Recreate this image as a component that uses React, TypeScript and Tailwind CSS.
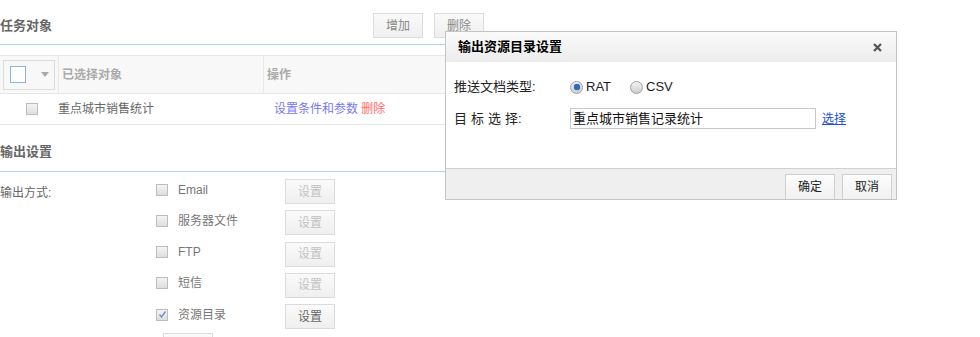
import React from 'react';

const outputs = [
  { label: 'Email', checked: false },
  { label: '服务器文件', checked: false },
  { label: 'FTP', checked: false },
  { label: '短信', checked: false },
  { label: '资源目录', checked: true },
];

const SmallCheck = ({ checked = false }: { checked?: boolean }) => (
  <span className="flex h-[12px] w-[12px] shrink-0 items-center justify-center border border-[#bdbdbd] bg-gradient-to-b from-[#f4f4f4] to-[#dedede]">
    {checked && (
      <svg width="9" height="9" viewBox="0 0 9 9">
        <path d="M1.5 4.5 L3.5 7 L7.5 1.5" fill="none" stroke="#7f93c9" strokeWidth="1.5" />
      </svg>
    )}
  </span>
);

const GreyButton = ({ children, disabled = false, className = '' }: { children?: React.ReactNode; disabled?: boolean; className?: string }) => (
  <div
    className={`flex h-[25px] w-[50px] shrink-0 items-center justify-center border border-[#dcdcdc] bg-gradient-to-b from-[#fafafa] to-[#efefef] text-[12px] ${
      disabled ? 'text-[#c2c2c2]' : 'text-[#666]'
    } ${className}`}
  >
    {children}
  </div>
);

const Radio = ({ checked }: { checked: boolean }) => (
  <span className="flex h-[13px] w-[13px] items-center justify-center rounded-full border border-[#a0a0a0] bg-gradient-to-b from-[#f2f2f2] to-[#cfcfcf]">
    {checked && <span className="h-[6px] w-[6px] rounded-full bg-[#2f6db5] shadow-[0_0_1px_#163d70]" />}
  </span>
);

export default function App() {
  return (
    <div className="relative h-[337px] w-[980px] overflow-hidden bg-white font-['Liberation_Sans','Noto_Sans_CJK_SC',sans-serif] text-[12px] text-[#666]">
      {/* page behind the dialog */}
      <div className="w-[880px]">
        <div className="flex items-center border-b border-[#acd3ee] pt-[13px] pb-[6px]">
          <div className="w-[373px] text-[13px] font-bold text-[#666]">任务对象</div>
          <GreyButton className="w-[49px] text-[#888]">增加</GreyButton>
          <GreyButton className="ml-[11px] w-[49px] text-[#888]">删除</GreyButton>
        </div>

        <div className="mt-[10px] border-y border-[#e6e6e6]">
          <div className="flex h-[38px] border-b border-[#e6e6e6] bg-[#f8f8f8]">
            <div className="flex w-[58px] items-center pl-[3px]">
              <div className="flex h-[30px] w-[52px] items-center border border-[#dcdcdc]">
                <span className="ml-[6px] h-[17px] w-[16px] border border-[#8eb3dd] bg-white" />
                <span className="ml-[15px] h-0 w-0 border-x-[4px] border-t-[5px] border-x-transparent border-t-[#aaa]" />
              </div>
            </div>
            <div className="flex w-[205px] items-center border-l border-[#e8e8e8] pl-[3px] font-bold text-[#aaa]">已选择对象</div>
            <div className="flex flex-1 items-center border-l border-[#e8e8e8] pl-[3px] font-bold text-[#aaa]">操作</div>
          </div>
          <div className="flex h-[30px] items-center">
            <div className="w-[58px] pl-[26px]">
              <SmallCheck />
            </div>
            <div className="w-[216px]">重点城市销售统计</div>
            <div className="text-[#7777f2]">
              设置条件和参数 <span className="text-[#ff6b6b]">删除</span>
            </div>
          </div>
        </div>

        <div className="flex h-[47px] items-end border-b border-[#b7cfe2] pb-[10px] text-[13px] font-bold text-[#666]">输出设置</div>

        <div className="flex pt-[7px]">
          <div className="flex h-[25px] w-[156px] items-center pt-[3px]">输出方式:</div>
          <div className="flex flex-col gap-[6.25px]">
            {outputs.map((o) => (
              <div key={o.label} className="flex h-[25px] items-center">
                <div className="flex w-[129px] items-center pb-[4px]">
                  <SmallCheck checked={o.checked} />
                  <span className="ml-[10px] text-[#777]">{o.label}</span>
                </div>
                <GreyButton disabled={!o.checked}>设置</GreyButton>
              </div>
            ))}
          </div>
        </div>
        <GreyButton className="ml-[163px] mt-[4px]" />
      </div>

      {/* dialog */}
      <div className="absolute left-[445px] top-[31px] flex h-[169px] w-[452px] flex-col border border-[#c4c4c4] bg-white">
        <div className="flex h-[30px] items-center justify-between bg-gradient-to-b from-[#fbfbfb] to-[#ececec] pl-[12px] pr-[14px]">
          <span className="text-[13px] font-bold text-black">输出资源目录设置</span>
          <svg width="9" height="9" viewBox="0 0 9 9">
            <path d="M1 1 L8 8 M8 1 L1 8" stroke="#555" strokeWidth="2.2" />
          </svg>
        </div>
        <div className="flex-1 pl-[8px] pt-[16px] text-[#222]">
          <div className="flex h-[18px] items-center">
            <span className="w-[116px] text-[13px]">推送文档类型:</span>
            <Radio checked />
            <span className="ml-[3px] w-[44px] text-[13px]">RAT</span>
            <Radio checked={false} />
            <span className="ml-[3px] text-[13px]">CSV</span>
          </div>
          <div className="mt-[12px] flex items-center">
            <span className="w-[116px] text-[13px]">
              <span className="tracking-[4px]">目标选</span>择:
            </span>
            <div className="flex h-[21px] w-[246px] items-center border border-[#c9c9c9] pl-[2px] text-[13px] text-[#111]">重点城市销售记录统计</div>
            <span className="ml-[6px] text-[12px] text-[#1a4fd6] underline">选择</span>
          </div>
        </div>
        <div className="flex h-[31px] items-end justify-end gap-[7px] border-t border-[#d0d0d0] bg-[#efefef] pr-[4px]">
          <div className="flex h-[25px] w-[50px] items-center justify-center border border-b-0 border-[#cfcfcf] bg-gradient-to-b from-[#fdfdfd] to-[#f0f0f0] text-[12px] text-[#222]">确定</div>
          <div className="flex h-[25px] w-[50px] items-center justify-center border border-b-0 border-[#cfcfcf] bg-gradient-to-b from-[#fdfdfd] to-[#f0f0f0] text-[12px] text-[#222]">取消</div>
        </div>
      </div>
    </div>
  );
}
